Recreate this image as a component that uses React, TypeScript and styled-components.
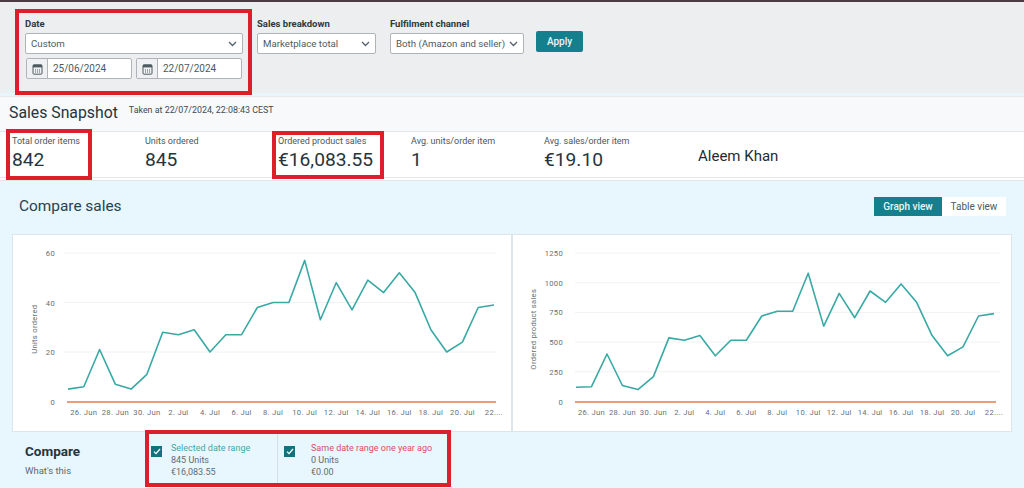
import React from "react";
import styled, { createGlobalStyle } from "styled-components";

const FONT = `Roboto, "Noto Sans", Arial, sans-serif`;

const Global = createGlobalStyle`
  html, body { margin: 0; padding: 0; background: #e8f6fd; }
  body { font-family: ${FONT}; color: #26343d; }
  * { box-sizing: border-box; }
`;

const Page = styled.div`
  width: 1024px;
  height: 488px;
  overflow: hidden;
  display: flex;
  flex-direction: column;
  background: #e8f6fd;
  border-top: 2px solid #4c3b42;
`;

const FilterBar = styled.div`
  height: 91px;
  flex: none;
  background: #eceeef;
  display: flex;
  align-items: flex-start;
  padding: 15px 0 0 25px;
`;

const Field = styled.div<{ $width: number; $gap: number }>`
  width: ${(p) => p.$width}px;
  margin-right: ${(p) => p.$gap}px;
  display: flex;
  flex-direction: column;
  position: relative;
`;

const FieldLabel = styled.div`
  font-size: 9.5px;
  font-weight: 700;
  line-height: 13px;
  color: #2b3a42;
  margin-bottom: 3px;
`;

const Select = styled.div`
  height: 21px;
  background: #fff;
  border: 1px solid #aeb4b7;
  border-radius: 2px;
  display: flex;
  align-items: center;
  justify-content: space-between;
  padding: 0 5px;
  font-size: 9.7px;
  color: #4d5a61;
  white-space: nowrap;
`;

const DateRow = styled.div`
  display: flex;
  gap: 4px;
  margin: 4px 0 0 1px;
`;

const DateInput = styled.div`
  width: 106px;
  height: 21px;
  background: #fff;
  border: 1px solid #aeb4b7;
  border-radius: 2px;
  display: flex;
  align-items: center;
  font-size: 10px;
  color: #4d5a61;
`;

const DateIcon = styled.div`
  width: 21px;
  height: 100%;
  background: #eef0f1;
  border-right: 1px solid #aeb4b7;
  display: flex;
  align-items: center;
  justify-content: center;
  margin-right: 5px;
`;

const ApplyButton = styled.button`
  width: 47px;
  height: 21px;
  margin-top: 14px;
  border: none;
  border-radius: 2px;
  background: #14808e;
  color: #e8f6f7;
  font: 500 10px ${FONT};
`;

const Frame = styled.div<{ $top: number; $left: number; $w: number; $h: number }>`
  position: absolute;
  top: ${(p) => p.$top}px;
  left: ${(p) => p.$left}px;
  width: ${(p) => p.$w}px;
  height: ${(p) => p.$h}px;
  border: 4px solid #dc1f2b;
  pointer-events: none;
`;

const Snapshot = styled.div`
  flex: none;
  height: 85px;
  margin-top: 3px;
  background: #fff;
  border-top: 1px solid #e6e9ea;
  border-bottom: 1px solid #dfe4e6;
  display: flex;
  flex-direction: column;
`;

const SnapshotHead = styled.div`
  height: 34px;
  flex: none;
  background: #f8f9fa;
  display: flex;
  align-items: center;
  padding: 0 0 4px 9px;
  gap: 11px;
`;

const SnapshotTitle = styled.div`
  font-size: 15.8px;
  color: #26343d;
`;

const SnapshotTime = styled.div`
  font-size: 8.9px;
  color: #3d4a52;
  margin-bottom: 5px;
`;

const Metrics = styled.div`
  flex: none;
  height: 47px;
  display: flex;
  padding-left: 12px;
  border-top: 1px solid #e4e7e9;
  border-bottom: 1px solid #e4e7e9;
`;

const Metric = styled.div<{ $width: number }>`
  width: ${(p) => p.$width}px;
  position: relative;
  padding-top: 3px;
`;

const MetricLabel = styled.div`
  font-size: 9px;
  line-height: 13px;
  color: #4a5760;
  white-space: nowrap;
`;

const MetricValue = styled.div`
  font-size: 19.2px;
  line-height: 23px;
  color: #26343d;
  white-space: nowrap;
`;

const PersonName = styled.div`
  font-size: 15px;
  line-height: 48px;
  color: #1f2b33;
  white-space: nowrap;
`;

const CompareBand = styled.div`
  flex: 1;
  display: flex;
  flex-direction: column;
  padding: 0 12px;
`;

const SectionHead = styled.div`
  height: 53px;
  flex: none;
  display: flex;
  align-items: center;
  justify-content: space-between;
  padding: 0 6px 2px 7px;
`;

const SectionTitle = styled.div`
  font-size: 15.4px;
  color: #26434f;
  margin-bottom: 1px;
`;

const Toggle = styled.div`
  display: flex;
  height: 19px;
`;

const ToggleItem = styled.div<{ $active?: boolean; $width: number }>`
  width: ${(p) => p.$width}px;
  display: flex;
  align-items: center;
  justify-content: center;
  font-size: 10px;
  font-weight: ${(p) => (p.$active ? 500 : 400)};
  background: ${(p) => (p.$active ? "#14808e" : "#fff")};
  color: ${(p) => (p.$active ? "#e8f6f7" : "#4d5a61")};
`;

const Charts = styled.div`
  flex: none;
  height: 198px;
  display: flex;
`;

const ChartCard = styled.div`
  flex: 1;
  background: #fff;
  border: 1px solid #dbe5ea;
  min-width: 0;
`;

const ChartSvg = styled.svg`
  display: block;
  width: 100%;
  height: 100%;
`;

const AxisText = styled.text`
  font-family: ${FONT};
  font-size: 7.6px;
  fill: #666f75;
  letter-spacing: 0.3px;
`;

const CompareRow = styled.div`
  flex: 1;
  display: flex;
  padding-left: 13px;
`;

const CompareIntro = styled.div`
  width: 126px;
  flex: none;
  padding-top: 10px;
`;

const CompareTitle = styled.div`
  font-size: 13.5px;
  line-height: 18px;
  font-weight: 700;
  color: #26343d;
`;

const WhatsThis = styled.div`
  font-size: 9.5px;
  line-height: 13px;
  margin-top: 4px;
  color: #5a6a72;
`;

const Ranges = styled.div`
  position: relative;
  display: flex;
  height: 52px;
`;

const Range = styled.div<{ $width: number; $gap: number; $pad: number; $divider?: boolean }>`
  width: ${(p) => p.$width}px;
  display: flex;
  gap: ${(p) => p.$gap}px;
  padding: 10px 0 0 ${(p) => p.$pad}px;
  border-right: ${(p) => (p.$divider ? "1px solid #d3dfe5" : "none")};
`;

const Check = styled.div`
  width: 11px;
  height: 11px;
  margin-top: 4px;
  flex: none;
  background: #14727f;
  display: flex;
  align-items: center;
  justify-content: center;
`;

const RangeText = styled.div`
  font-size: 9px;
  line-height: 12px;
  color: #5f6c73;
  white-space: nowrap;
`;

const RangeName = styled.div<{ $color: string }>`
  color: ${(p) => p.$color};
`;

const Chevron = () => (
  <svg width="9" height="6" viewBox="0 0 9 6" fill="none">
    <path d="M1 1l3.5 3.5L8 1" stroke="#55626a" strokeWidth="1.3" />
  </svg>
);

const CalendarIcon = () => (
  <svg width="11" height="12" viewBox="0 0 11 12" fill="none">
    <rect x="1" y="1.8" width="9" height="9.4" rx="1" stroke="#4e5a61" />
    <rect x="1" y="1.8" width="9" height="2.6" fill="#4e5a61" />
    <path d="M3 7h1M5 7h1M7 7h1M3 9h1M5 9h1M7 9h1" stroke="#4e5a61" />
  </svg>
);

const Tick = () => (
  <svg width="8" height="7" viewBox="0 0 8 7" fill="none">
    <path d="M1 3.6l2 2L7 1" stroke="#fff" strokeWidth="1.3" />
  </svg>
);

const DAYS = ["26. Jun", "28. Jun", "30. Jun", "2. Jul", "4. Jul", "6. Jul", "8. Jul", "10. Jul", "12. Jul", "14. Jul", "16. Jul", "18. Jul", "20. Jul", "22...."];

type ChartProps = {
  yTitle: string;
  ticks: number[];
  data: number[];
  max: number;
  x0: number;
  x1: number;
  gridX0: number;
  gridX1: number;
  labelX: number;
  titleX: number;
};

const H_TOP = 18;
const H_BOTTOM = 166.5;

const Chart = ({ yTitle, ticks, data, max, x0, x1, gridX0, gridX1, labelX, titleX }: ChartProps) => {
  const step = (x1 - x0) / (data.length - 1);
  const y = (v: number) => H_BOTTOM - (v / max) * (H_BOTTOM - H_TOP);
  const points = data.map((v, i) => `${(x0 + i * step).toFixed(1)},${y(v).toFixed(1)}`).join(" ");
  const mid = (H_TOP + H_BOTTOM) / 2;
  return (
    <ChartCard>
      <ChartSvg>
        {ticks.map((t) => (
          <g key={t}>
            {t > 0 && <line x1={gridX0} x2={gridX1} y1={y(t)} y2={y(t)} stroke="#f0f2f3" />}
            <AxisText x={labelX} y={y(t) + 3} textAnchor="end">{t}</AxisText>
          </g>
        ))}
        <AxisText transform={`translate(${titleX} ${mid + 2}) rotate(-90)`} textAnchor="middle">{yTitle}</AxisText>
        {DAYS.map((d, i) => (
          <AxisText key={d} x={x0 + step + i * 2 * step} y={H_BOTTOM + 13} textAnchor="middle">{d}</AxisText>
        ))}
        <line x1={x0 - 1} x2={x1 + 2} y1={H_BOTTOM + 0.5} y2={H_BOTTOM + 0.5} stroke="#ea7a4c" strokeWidth="1.6" />
        <polyline points={points} fill="none" stroke="#38a9a5" strokeWidth="1.6" strokeLinejoin="round" />
      </ChartSvg>
    </ChartCard>
  );
};

const UNITS = [5, 6, 21, 7, 5, 11, 28, 27, 29, 20, 27, 27, 38, 40, 40, 57, 33, 48, 37, 49, 44, 52, 44, 29, 20, 24, 38, 39];
const SALES = [120, 125, 400, 135, 100, 210, 535, 515, 555, 385, 515, 515, 720, 760, 760, 1080, 635, 910, 705, 930, 835, 990, 835, 555, 385, 460, 720, 740];

export default function App() {
  return (
    <Page>
      <Global />
      <FilterBar>
        <Field $width={218} $gap={14}>
          <FieldLabel>Date</FieldLabel>
          <Select>Custom<Chevron /></Select>
          <DateRow>
            <DateInput><DateIcon><CalendarIcon /></DateIcon>25/06/2024</DateInput>
            <DateInput><DateIcon><CalendarIcon /></DateIcon>22/07/2024</DateInput>
          </DateRow>
          <Frame $top={-8} $left={-10} $w={237} $h={86} />
        </Field>
        <Field $width={119} $gap={14}>
          <FieldLabel>Sales breakdown</FieldLabel>
          <Select>Marketplace total<Chevron /></Select>
        </Field>
        <Field $width={134} $gap={12}>
          <FieldLabel>Fulfilment channel</FieldLabel>
          <Select>Both (Amazon and seller)<Chevron /></Select>
        </Field>
        <ApplyButton>Apply</ApplyButton>
      </FilterBar>
      <Snapshot>
        <SnapshotHead>
          <SnapshotTitle>Sales Snapshot</SnapshotTitle>
          <SnapshotTime>Taken at 22/07/2024, 22:08:43 CEST</SnapshotTime>
        </SnapshotHead>
        <Metrics>
          <Metric $width={133}>
            <MetricLabel>Total order items</MetricLabel>
            <MetricValue>842</MetricValue>
            <Frame $top={-3} $left={-6} $w={86} $h={51} />
          </Metric>
          <Metric $width={133}>
            <MetricLabel>Units ordered</MetricLabel>
            <MetricValue>845</MetricValue>
          </Metric>
          <Metric $width={133}>
            <MetricLabel>Ordered product sales</MetricLabel>
            <MetricValue>€16,083.55</MetricValue>
            <Frame $top={-1} $left={-6} $w={112} $h={48} />
          </Metric>
          <Metric $width={133}>
            <MetricLabel>Avg. units/order item</MetricLabel>
            <MetricValue>1</MetricValue>
          </Metric>
          <Metric $width={154}>
            <MetricLabel>Avg. sales/order item</MetricLabel>
            <MetricValue>€19.10</MetricValue>
          </Metric>
          <PersonName>Aleem Khan</PersonName>
        </Metrics>
      </Snapshot>
      <CompareBand>
        <SectionHead>
          <SectionTitle>Compare sales</SectionTitle>
          <Toggle>
            <ToggleItem $active $width={68}>Graph view</ToggleItem>
            <ToggleItem $width={64}>Table view</ToggleItem>
          </Toggle>
        </SectionHead>
        <Charts>
          <Chart yTitle="Units ordered" ticks={[0, 20, 40, 60]} data={UNITS} max={60} x0={55} x1={481} gridX0={51} gridX1={483} labelX={42} titleX={24} />
          <Chart yTitle="Ordered product sales" ticks={[0, 250, 500, 750, 1000, 1250]} data={SALES} max={1250} x0={63} x1={481} gridX0={62} gridX1={487} labelX={50} titleX={23} />
        </Charts>
        <CompareRow>
          <CompareIntro>
            <CompareTitle>Compare</CompareTitle>
            <WhatsThis>What's this</WhatsThis>
          </CompareIntro>
          <Ranges>
            <Frame $top={-2} $left={-6} $w={306} $h={57} />
            <Range $width={127} $gap={9} $pad={0} $divider>
              <Check><Tick /></Check>
              <RangeText>
                <RangeName $color="#3fa8a4">Selected date range</RangeName>
                <div>845 Units</div>
                <div>€16,083.55</div>
              </RangeText>
            </Range>
            <Range $width={165} $gap={16} $pad={6}>
              <Check><Tick /></Check>
              <RangeText>
                <RangeName $color="#d8505f">Same date range one year ago</RangeName>
                <div>0 Units</div>
                <div>€0.00</div>
              </RangeText>
            </Range>
          </Ranges>
        </CompareRow>
      </CompareBand>
    </Page>
  );
}
